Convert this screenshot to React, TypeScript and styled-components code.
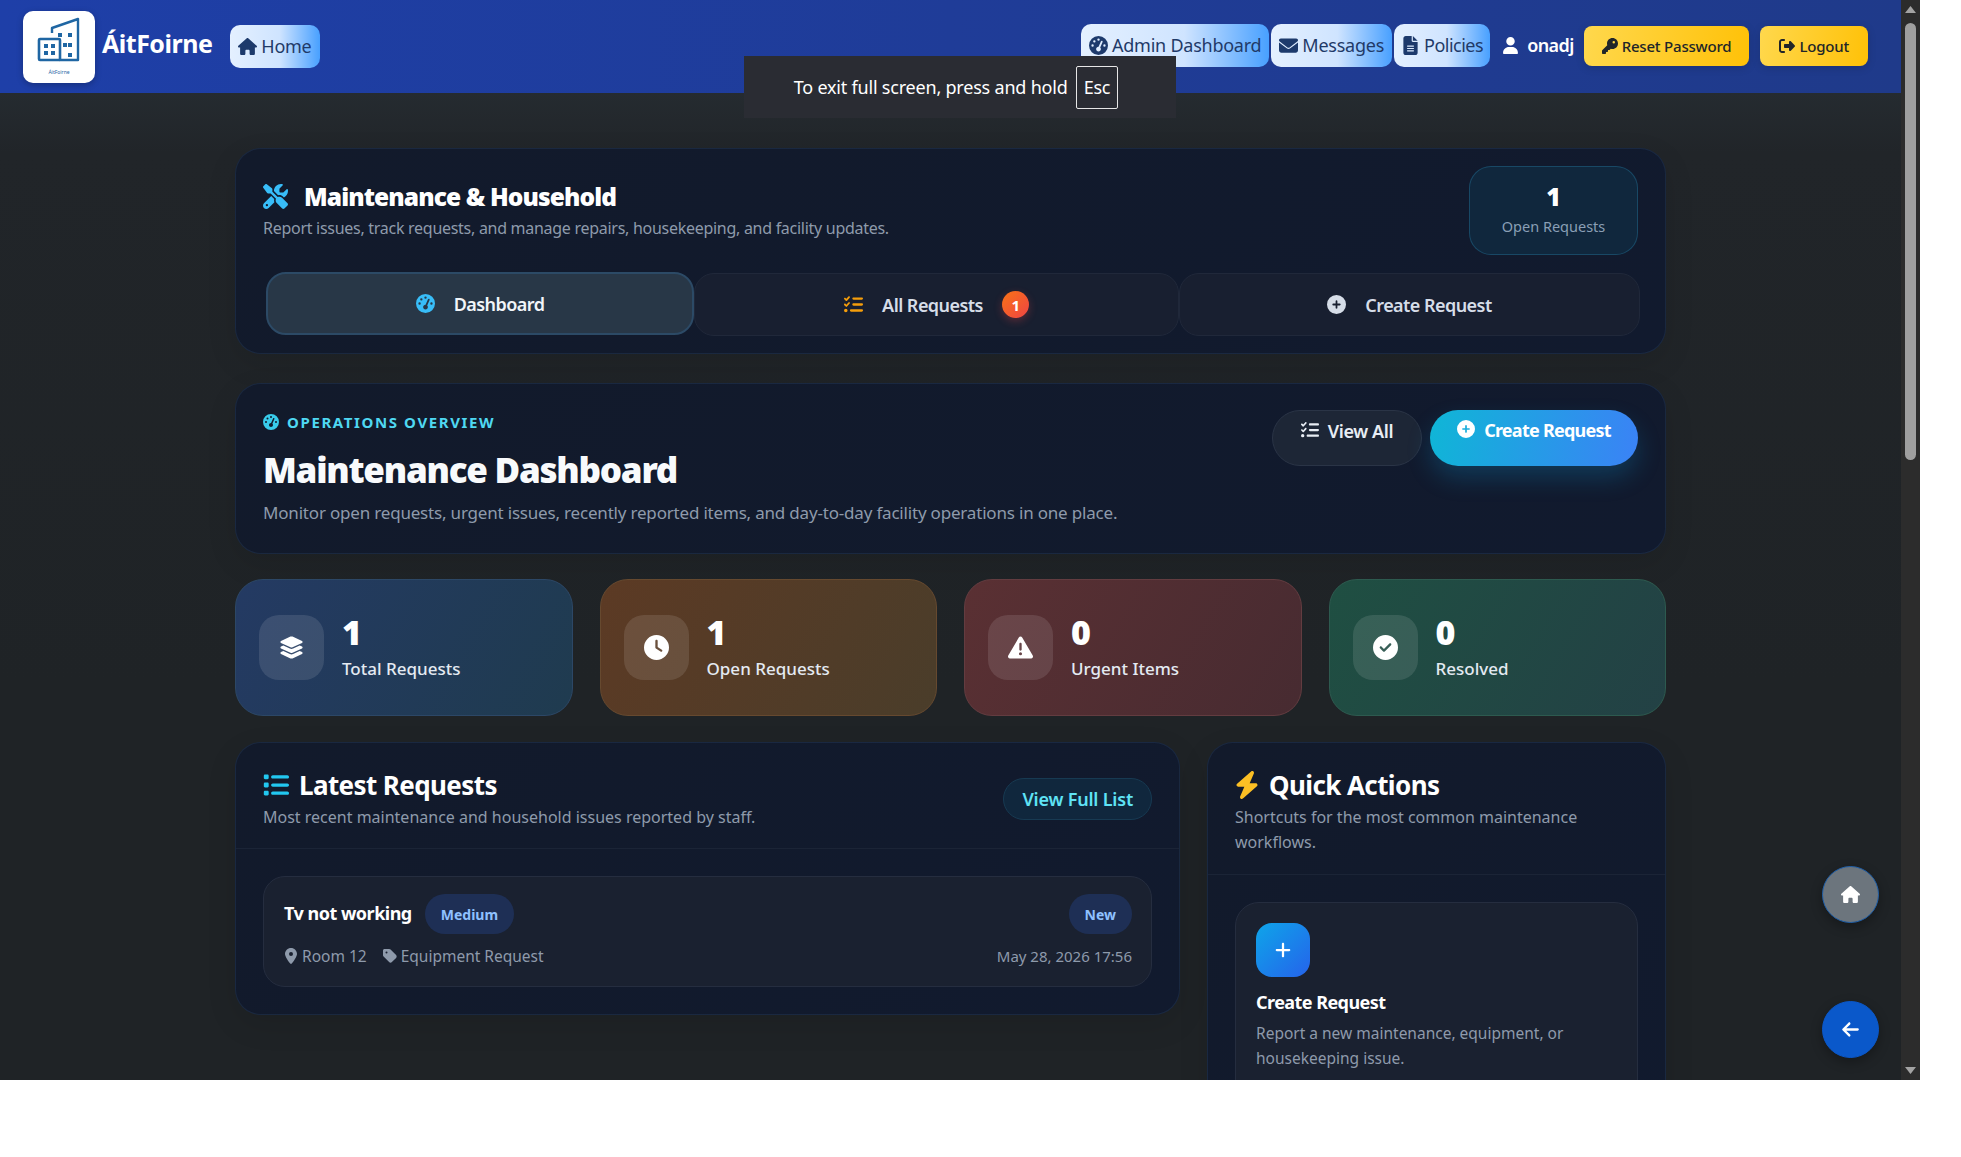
import React from 'react';
import styled, { createGlobalStyle } from 'styled-components';
import {
    FaArrowLeft, FaBolt, FaCircleCheck, FaCirclePlus, FaClock, FaEnvelope, FaFileLines, FaGaugeHigh,
    FaHouse, FaKey, FaLayerGroup, FaList, FaListCheck, FaLocationDot, FaPlus, FaRightFromBracket,
    FaScrewdriverWrench, FaTag, FaTriangleExclamation, FaUser
} from 'react-icons/fa6';

const GlobalStyle = createGlobalStyle`
    html, body { margin: 0; padding: 0; background: #fff; }
    body { font-family: "Noto Sans", "Open Sans", "Liberation Sans", sans-serif; }
    * { box-sizing: border-box; }
`

const Frame = styled.div`
    position: relative;
    width: 1920px;
    height: 1080px;
    display: flex;
    overflow: hidden;
    background: #212529;
`

const Main = styled.div`
    flex: 1;
    min-width: 0;
    display: flex;
    flex-direction: column;
`

const Header = styled.header`
    height: 93px;
    flex: none;
    display: flex;
    align-items: center;
    padding: 0 33px 0 23px;
    background: linear-gradient(90deg, #1e3fa8 0%, #1f3c98 50%, #1f3a8a 100%);
`

const LogoBox = styled.div`
    width: 72px;
    height: 72px;
    border-radius: 10px;
    background: #fff;
    box-shadow: 0 2px 6px rgba(0,0,0,0.25);
`

const Brand = styled.span`
    margin: -8px 18px 0 7px;
    font-size: 25px;
    letter-spacing: -0.5px;
    font-weight: 700;
    color: #fff;
`

const Spacer = styled.div`
    flex: 1;
`

const NavLink = styled.a<{ $drop?: number; $tight?: boolean }>`
    display: flex;
    align-items: center;
    gap: 4px;
    height: 43px;
    padding: 0 ${props => props.$tight ? 7 : 8}px;
    margin-top: ${props => props.$drop ?? -3}px;
    margin-right: 2px;
    border-radius: 10px;
    font-size: 18px;
    letter-spacing: ${props => props.$tight ? -0.5 : -0.25}px;
    color: #1f3a68;
    background: linear-gradient(90deg, #e4f0ff 0%, #cfe4ff 55%, #48a0ff 100%);
    svg { font-size: 19px; color: #1d3a6c; }
`

const UserName = styled.span`
    display: flex;
    align-items: center;
    gap: 8px;
    margin: -3px 10px 0 10px;
    font-size: 18px;
    letter-spacing: -0.6px;
    font-weight: 600;
    color: #fff;
    svg { font-size: 17px; }
`

const YellowButton = styled.a<{ $gap?: number; $pad?: number }>`
    display: flex;
    align-items: center;
    gap: 4px;
    height: 40px;
    margin-top: -1px;
    margin-right: ${props => props.$gap ?? 0}px;
    padding: 0 ${props => props.$pad ?? 18}px;
    border-radius: 8px;
    font-size: 15px;
    letter-spacing: -0.2px;
    font-weight: 500;
    color: #212529;
    background: linear-gradient(100deg, #ffd84d 0%, #ffc107 100%);
    box-shadow: 0 2px 8px rgba(0,0,0,0.15);
    svg { font-size: 16px; }
`

const Content = styled.main`
    flex: 1;
    min-height: 0;
    padding: 55px 0 0 235px;
    background: linear-gradient(180deg, #252b30 0%, #212529 6%, #1f2326 60%);
`

const Column = styled.div`
    width: 1431px;
    display: flex;
    flex-direction: column;
`

const Panel = styled.section`
    border-radius: 26px;
    background: linear-gradient(135deg, #121a2b 0%, #111a2e 100%);
    border: 1px solid rgba(96,165,250,0.10);
    box-shadow: 0 10px 30px rgba(0,0,0,0.10);
`

const HeroPanel = styled(Panel)`
    height: 206px;
    padding: 17px 27px 0 27px;
    margin-bottom: 29px;
`

const HeroTop = styled.div`
    display: flex;
    justify-content: space-between;
    height: 89px;
`

const TitleRow = styled.div`
    display: flex;
    align-items: center;
    gap: 16px;
    margin-top: 16px;
    height: 28px;
    svg { font-size: 25px; color: #38bdf8; }
`

const HeroTitle = styled.h1`
    margin: 0;
    font-size: 24.5px;
    letter-spacing: -0.9px;
    font-weight: 900;
    color: #fff;
`

const Muted = styled.p`
    margin: 6px 0 0;
    font-size: 16px;
    letter-spacing: -0.28px;
    line-height: 25px;
    color: #8e9aab;
`

const OpenBox = styled.div`
    width: 169px;
    height: 89px;
    border-radius: 22px;
    text-align: center;
    background: #10273d;
    border: 1px solid rgba(56,189,248,0.22);
    padding-top: 12px;
`

const OpenNumber = styled.div`
    font-size: 25px;
    line-height: 34px;
    font-weight: 900;
    color: #fff;
`

const OpenLabel = styled.div`
    font-size: 14.5px;
    line-height: 24px;
    margin-top: 1px;
    color: #8a9fb5;
`

const Tabs = styled.nav`
    display: grid;
    grid-template-columns: 428px 485px 461px;
    margin: 18px 0 0 3px;
    align-items: start;
`

const Tab = styled.a<{ $active?: boolean }>`
    height: 63px;
    margin-top: ${props => props.$active ? -1 : 0}px;
    display: flex;
    align-items: center;
    justify-content: center;
    gap: 19px;
    border-radius: 20px;
    font-size: 18px;
    letter-spacing: -0.55px;
    font-weight: 600;
    color: ${props => props.$active ? '#f1f5f9' : '#d6dde8'};
    background: ${props => props.$active ? '#283747' : '#181f30'};
    border: ${props => props.$active ? '2px solid #2c4a66' : '1px solid #20283a'};
`

const TabIcon = styled.span<{ $color: string }>`
    display: flex;
    font-size: 19px;
    color: ${props => props.$color};
`

const TabCount = styled.span`
    width: 27px;
    height: 27px;
    border-radius: 50%;
    display: flex;
    align-items: center;
    justify-content: center;
    font-size: 15px;
    font-weight: 700;
    color: #fff;
    background: linear-gradient(135deg, #f97316, #ef4444);
    box-shadow: 0 3px 8px rgba(239,68,68,0.3);
`

const OverviewPanel = styled(Panel)`
    height: 171px;
    display: flex;
    justify-content: space-between;
    padding: 27px 27px 0 27px;
    margin-bottom: 25px;
`

const Eyebrow = styled.div`
    display: flex;
    align-items: center;
    gap: 8px;
    font-size: 15px;
    line-height: 22px;
    font-weight: 700;
    letter-spacing: 1.6px;
    color: #4fd8f2;
    svg { font-size: 16px; color: #38cbea; }
`

const OverviewTitle = styled.h2`
    margin: 12px 0 0;
    font-size: 35px;
    letter-spacing: -1.25px;
    line-height: 50px;
    font-weight: 900;
    color: #f8fafc;
`

const OverviewText = styled(Muted)`
    margin-top: 5px;
    font-size: 17px;
    letter-spacing: -0.19px;
`

const Actions = styled.div`
    display: flex;
    gap: 8px;
    flex: none;
    margin-top: -1px;
`

const PillButton = styled.a<{ $primary?: boolean }>`
    height: 56px;
    padding-top: 8px;
    width: ${props => props.$primary ? 208 : 150}px;
    display: flex;
    justify-content: center;
    gap: 9px;
    border-radius: 28px;
    white-space: nowrap;
    font-size: 18px;
    letter-spacing: ${props => props.$primary ? -0.75 : -0.4}px;
    line-height: 25px;
    font-weight: ${props => props.$primary ? 700 : 600};
    color: ${props => props.$primary ? '#fff' : '#e8edf4'};
    background: ${props => props.$primary ? 'linear-gradient(100deg, #0fb6d6 0%, #3b82f6 100%)' : '#1d2636'};
    border: ${props => props.$primary ? 'none' : '1px solid #2a3446'};
    box-shadow: ${props => props.$primary ? '0 12px 24px rgba(14,165,233,0.22)' : 'none'};
    svg { font-size: 18px; margin-top: 2px; }
`

const StatGrid = styled.div`
    display: grid;
    grid-template-columns: repeat(4, 1fr);
    gap: 27px;
    margin-bottom: 26px;
`

const StatCard = styled.div<{ $bg: string; $line: string }>`
    height: 137px;
    display: flex;
    align-items: center;
    gap: 18px;
    padding: 0 23px;
    border-radius: 28px;
    background: ${props => props.$bg};
    border: 1px solid ${props => props.$line};
`

const StatIcon = styled.div`
    width: 65px;
    height: 65px;
    flex: none;
    border-radius: 20px;
    display: flex;
    align-items: center;
    justify-content: center;
    font-size: 25px;
    color: #fff;
    background: rgba(255,255,255,0.11);
`

const StatNumber = styled.div`
    margin: -3px 0 3px;
    font-size: 34px;
    line-height: 42px;
    font-weight: 900;
    color: #fff;
`

const StatLabel = styled.div`
    font-size: 17px;
    line-height: 25px;
    font-weight: 500;
    color: #e4eaf2;
`

const Lower = styled.div`
    display: grid;
    grid-template-columns: 945px 459px;
    gap: 27px;
    align-items: start;
`

const CardHead = styled.div<{ $height: number }>`
    height: ${props => props.$height}px;
    padding: 25px 27px 0;
    display: flex;
    justify-content: space-between;
    border-bottom: 1px solid #1b2436;
`

const CardTitle = styled.h3<{ $color: string; $bolt?: boolean }>`
    margin: 0;
    display: flex;
    align-items: center;
    gap: ${props => props.$bolt ? 8 : 10}px;
    height: 34px;
    font-size: 26px;
    letter-spacing: -0.6px;
    font-weight: 700;
    color: #fff;
    svg {
        font-size: ${props => props.$bolt ? 28 : 26}px;
        margin-left: ${props => props.$bolt ? -2 : 0}px;
        color: ${props => props.$color};
    }
`

const CardSub = styled.p`
    margin: 3px 0 0;
    font-size: 16px;
    line-height: 25px;
    color: #8e9aab;
`

const FullListButton = styled.a`
    height: 42px;
    margin-top: 10px;
    padding: 0 18px;
    display: flex;
    align-items: center;
    border-radius: 21px;
    font-size: 18px;
    letter-spacing: -0.2px;
    font-weight: 600;
    color: #5fe3f5;
    background: #10273d;
    border: 1px solid #173a52;
`

const CardBody = styled.div`
    padding: 27px;
`

const RequestRow = styled.div`
    height: 111px;
    padding: 17px 19px 0 20px;
    border-radius: 22px;
    background: #1a2130;
    border: 1px solid #252d3f;
`

const RowLine = styled.div`
    display: flex;
    align-items: center;
    justify-content: space-between;
`

const RowTitle = styled.div`
    display: flex;
    align-items: center;
    gap: 13px;
`

const RowName = styled.span`
    margin-top: -2px;
    font-size: 18px;
    letter-spacing: -0.5px;
    font-weight: 700;
    color: #fff;
`

const Chip = styled.span`
    height: 40px;
    padding: 0 16px;
    display: flex;
    align-items: center;
    border-radius: 20px;
    font-size: 14px;
    font-weight: 700;
    color: #8fc1ff;
    background: #1e2f55;
`

const MetaLine = styled(RowLine)`
    margin-top: 10px;
    font-size: 15.5px;
    line-height: 24px;
    color: #8e9aab;
`

const MetaGroup = styled.div`
    display: flex;
    gap: 16px;
`

const MetaItem = styled.span`
    display: flex;
    align-items: center;
    gap: 3px;
    svg { font-size: 16px; margin-left: -1px; }
`

const MetaDate = styled.span`
    font-size: 15px;
`

const QuickCard = styled.div`
    height: 240px;
    padding: 20px;
    border-radius: 24px;
    background: #1a2130;
    border: 1px solid #252d3f;
`

const QuickIcon = styled.div`
    width: 54px;
    height: 54px;
    border-radius: 16px;
    display: flex;
    align-items: center;
    justify-content: center;
    font-size: 18px;
    color: #fff;
    background: linear-gradient(135deg, #0ea5e9, #2563eb);
`

const QuickTitle = styled.div`
    margin-top: 12px;
    font-size: 18px;
    letter-spacing: -0.55px;
    line-height: 26px;
    font-weight: 700;
    color: #fff;
`

const QuickText = styled.p`
    margin: 6px 0 0;
    font-size: 15.5px;
    line-height: 25px;
    color: #8e9aab;
`

const ScrollBar = styled.div`
    width: 19px;
    flex: none;
    display: flex;
    flex-direction: column;
    align-items: center;
    background: #2c2c2c;
`

const ScrollThumb = styled.div`
    width: 11px;
    height: 437px;
    margin-top: 4px;
    border-radius: 6px;
    background: #9f9f9f;
`

const ScrollGap = styled.div`
    flex: 1;
`

const ScrollArrow = styled.svg`
    width: 13px;
    height: 19px;
    flex: none;
    display: block;
`

const FullScreenToast = styled.div`
    position: absolute;
    left: 744px;
    top: 56px;
    width: 432px;
    height: 62px;
    padding-right: 8px;
    display: flex;
    align-items: center;
    justify-content: center;
    gap: 8px;
    font-size: 18px;
    letter-spacing: -0.2px;
    color: #fff;
    background: #2a2c33;
`

const EscKey = styled.span`
    height: 43px;
    padding: 0 7px;
    display: flex;
    align-items: center;
    border: 1px solid #e6e6e6;
    border-radius: 2px;
`

const FloatButton = styled.a<{ $top: number; $bg: string; $line: string }>`
    position: absolute;
    left: 1822px;
    top: ${props => props.$top}px;
    width: 57px;
    height: 57px;
    border-radius: 50%;
    display: flex;
    align-items: center;
    justify-content: center;
    font-size: 19px;
    color: #fff;
    background: ${props => props.$bg};
    border: 1px solid ${props => props.$line};
    box-shadow: 0 4px 12px rgba(0,0,0,0.3);
`

const stats = [
    { label: 'Total Requests', value: 1, icon: <FaLayerGroup />, bg: 'linear-gradient(120deg, #243a63, #1f3b4f)', line: '#2c4766' },
    { label: 'Open Requests', value: 1, icon: <FaClock />, bg: 'linear-gradient(120deg, #5c3a24, #4a3d2a)', line: '#66492f' },
    { label: 'Urgent Items', value: 0, icon: <FaTriangleExclamation />, bg: 'linear-gradient(120deg, #5a3033, #472b31)', line: '#633c40' },
    { label: 'Resolved', value: 0, icon: <FaCircleCheck />, bg: 'linear-gradient(120deg, #1f4f42, #234145)', line: '#2d5a4f' }
]

const BuildingLogo = () => (
    <svg width="72" height="72" viewBox="0 0 72 72" fill="none">
        <path d="M29 22V17L55 8V49H36" stroke="#1f66a3" strokeWidth="2.4" strokeLinejoin="round" />
        <rect x="16" y="28" width="21" height="21" fill="#fff" stroke="#1f66a3" strokeWidth="2.6" rx="1" />
        <g fill="#1f66a3">
            <rect x="21" y="33" width="4" height="4" /><rect x="28" y="33" width="4" height="4" />
            <rect x="21" y="40" width="4" height="4" /><rect x="28" y="40" width="4" height="4" />
            <rect x="35" y="22" width="4" height="4" /><rect x="45" y="22" width="4" height="4" />
            <rect x="40" y="32" width="4" height="4" /><rect x="45" y="32" width="4" height="4" />
            <rect x="45" y="42" width="4" height="4" />
        </g>
        <text x="36" y="63" fontSize="5" textAnchor="middle" fill="#1f66a3">ÁitFoirne</text>
    </svg>
)

export default function App() {
    return (
        <>
            <GlobalStyle />
            <Frame>
                <Main>
                    <Header>
                        <LogoBox><BuildingLogo /></LogoBox>
                        <Brand>ÁitFoirne</Brand>
                        <NavLink $drop={-1}><FaHouse />Home</NavLink>
                        <Spacer />
                        <NavLink><FaGaugeHigh />Admin Dashboard</NavLink>
                        <NavLink><FaEnvelope />Messages</NavLink>
                        <NavLink $tight><FaFileLines />Policies</NavLink>
                        <UserName><FaUser />onadj</UserName>
                        <YellowButton $gap={11}><FaKey />Reset Password</YellowButton>
                        <YellowButton $pad={19}><FaRightFromBracket />Logout</YellowButton>
                    </Header>
                    <Content>
                        <Column>
                            <HeroPanel>
                                <HeroTop>
                                    <div>
                                        <TitleRow>
                                            <FaScrewdriverWrench />
                                            <HeroTitle>Maintenance &amp; Household</HeroTitle>
                                        </TitleRow>
                                        <Muted>Report issues, track requests, and manage repairs, housekeeping, and facility updates.</Muted>
                                    </div>
                                    <OpenBox>
                                        <OpenNumber>1</OpenNumber>
                                        <OpenLabel>Open Requests</OpenLabel>
                                    </OpenBox>
                                </HeroTop>
                                <Tabs>
                                    <Tab $active><TabIcon $color="#38bdf8"><FaGaugeHigh /></TabIcon>Dashboard</Tab>
                                    <Tab><TabIcon $color="#f59e0b"><FaListCheck /></TabIcon>All Requests<TabCount>1</TabCount></Tab>
                                    <Tab><TabIcon $color="#d6dde8"><FaCirclePlus /></TabIcon>Create Request</Tab>
                                </Tabs>
                            </HeroPanel>
                            <OverviewPanel>
                                <div>
                                    <Eyebrow><FaGaugeHigh />OPERATIONS OVERVIEW</Eyebrow>
                                    <OverviewTitle>Maintenance Dashboard</OverviewTitle>
                                    <OverviewText>Monitor open requests, urgent issues, recently reported items, and day-to-day facility operations in one place.</OverviewText>
                                </div>
                                <Actions>
                                    <PillButton><FaListCheck />View All</PillButton>
                                    <PillButton $primary><FaCirclePlus />Create Request</PillButton>
                                </Actions>
                            </OverviewPanel>
                            <StatGrid>
                                {stats.map(stat => (
                                    <StatCard key={stat.label} $bg={stat.bg} $line={stat.line}>
                                        <StatIcon>{stat.icon}</StatIcon>
                                        <div>
                                            <StatNumber>{stat.value}</StatNumber>
                                            <StatLabel>{stat.label}</StatLabel>
                                        </div>
                                    </StatCard>
                                ))}
                            </StatGrid>
                            <Lower>
                                <Panel>
                                    <CardHead $height={106}>
                                        <div>
                                            <CardTitle $color="#22c7f0"><FaList />Latest Requests</CardTitle>
                                            <CardSub>Most recent maintenance and household issues reported by staff.</CardSub>
                                        </div>
                                        <FullListButton>View Full List</FullListButton>
                                    </CardHead>
                                    <CardBody>
                                        <RequestRow>
                                            <RowLine>
                                                <RowTitle><RowName>Tv not working</RowName><Chip>Medium</Chip></RowTitle>
                                                <Chip>New</Chip>
                                            </RowLine>
                                            <MetaLine>
                                                <MetaGroup>
                                                    <MetaItem><FaLocationDot />Room 12</MetaItem>
                                                    <MetaItem><FaTag />Equipment Request</MetaItem>
                                                </MetaGroup>
                                                <MetaDate>May 28, 2026 17:56</MetaDate>
                                            </MetaLine>
                                        </RequestRow>
                                    </CardBody>
                                </Panel>
                                <Panel>
                                    <CardHead $height={132}>
                                        <div>
                                            <CardTitle $color="#fbbf24" $bolt><FaBolt />Quick Actions</CardTitle>
                                            <CardSub>Shortcuts for the most common maintenance workflows.</CardSub>
                                        </div>
                                    </CardHead>
                                    <CardBody>
                                        <QuickCard>
                                            <QuickIcon><FaPlus /></QuickIcon>
                                            <QuickTitle>Create Request</QuickTitle>
                                            <QuickText>Report a new maintenance, equipment, or housekeeping issue.</QuickText>
                                        </QuickCard>
                                    </CardBody>
                                </Panel>
                            </Lower>
                        </Column>
                    </Content>
                </Main>
                <ScrollBar>
                    <ScrollArrow viewBox="0 0 13 19"><path d="M1 13L6.5 6L12 13Z" fill="#a3a3a3" /></ScrollArrow>
                    <ScrollThumb />
                    <ScrollGap />
                    <ScrollArrow viewBox="0 0 13 19"><path d="M1 6L6.5 13L12 6Z" fill="#a3a3a3" /></ScrollArrow>
                </ScrollBar>
                <FullScreenToast>To exit full screen, press and hold<EscKey>Esc</EscKey></FullScreenToast>
                <FloatButton $top={866} $bg="#6c757d" $line="#1f5fa8"><FaHouse /></FloatButton>
                <FloatButton $top={1001} $bg="#0a58ca" $line="#0a58ca"><FaArrowLeft /></FloatButton>
            </Frame>
        </>
    );
}
